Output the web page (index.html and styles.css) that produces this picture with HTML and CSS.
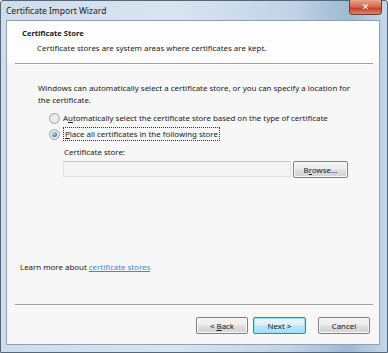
FILE: index.html
```html
<!DOCTYPE html>
<html>
<head>
<meta charset="utf-8">
<link rel="stylesheet" href="styles.css">
</head>
<body>
<div class="window">
  <div class="titlebar">
    <span class="title">Certificate Import Wizard</span>
    <span class="close"><span class="x">✕</span></span>
  </div>
  <div class="client">
    <div class="header">
      <div class="h-title">Certificate Store</div>
      <div class="h-sub">Certificate stores are system areas where certificates are kept.</div>
    </div>
    <div class="sep"></div>
    <div class="body">
      <p class="intro">Windows can automatically select a certificate store, or you can specify a location for the certificate.</p>
      <div class="radio-row">
        <span class="radio"></span>
        <span class="label">A<u>u</u>tomatically select the certificate store based on the type of certificate</span>
      </div>
      <div class="radio-row">
        <span class="radio checked"></span>
        <span class="label focus"><u>P</u>lace all certificates in the following store</span>
      </div>
      <div class="store-label">Certificate store:</div>
      <div class="store-row">
        <div class="field"></div>
        <div class="btn browse">B<u>r</u>owse...</div>
      </div>
      <div class="spacer"></div>
      <div class="learn">Learn more about <a class="link">certificate stores</a></div>
    </div>
    <div class="sep bottom"></div>
    <div class="footer">
      <div class="btn back"><span>&lt; <u>B</u>ack</span></div>
      <div class="btn default"><span>Next &gt;</span></div>
      <div class="btn cancel"><span>Cancel</span></div>
    </div>
  </div>
</div>
</body>
</html>
```
FILE: styles.css
```css
* { box-sizing: border-box; }
html, body { margin: 0; padding: 0; background: #ffffff; }
body {
  font-family: "Noto Sans", "Open Sans", sans-serif;
  font-size: 7.9px;
  color: #1a1a1a;
}
.window {
  width: 388px;
  height: 353px;
  border: 1px solid #55677a;
  border-radius: 3px 3px 0 0;
  background: linear-gradient(90deg, #cfdcea 0%, #d9e4f0 45%, #c2d3e6 75%, #9fbad3 90%, #c6d7ea 100%);
  padding: 0 7px 7px 5px;
  display: flex;
  flex-direction: column;
}
.titlebar {
  height: 19px;
  display: flex;
  align-items: flex-start;
  justify-content: space-between;
  flex-shrink: 0;
}
.title {
  font-size: 8.5px;
  color: #1a1a1a;
  padding: 4px 0 0 0;
}
.close {
  width: 33px;
  height: 15px;
  margin-right: -2px;
  margin-top: -1px;
  border: 1px solid #7a3a2e;
  border-top: none;
  border-radius: 0 0 4px 4px;
  background: linear-gradient(180deg, #e9a590 0%, #d5644a 50%, #c1432a 60%, #d98a70 100%);
  display: flex;
  align-items: center;
  justify-content: center;
}
.x { color: #fff; font-size: 9px; font-weight: bold; font-family: "DejaVu Sans", sans-serif; }
.client {
  flex: 1;
  border: 1px solid #8fa1b6;
  background: #f7f7f7;
  display: flex;
  flex-direction: column;
}
.header {
  background: #fdfdfd;
  height: 42px;
  padding: 5px 0 0 15px;
  flex-shrink: 0;
}
.h-title { font-weight: bold; line-height: 15px; font-size: 7.6px; }
.h-sub { line-height: 15px; padding-left: 15px; }
.sep {
  height: 2px;
  margin: 0 6px 0 8px;
  border-top: 1px solid #a0a0a0;
  border-bottom: 1px solid #ffffff;
  flex-shrink: 0;
}
.body {
  flex: 1;
  display: flex;
  flex-direction: column;
  padding: 17px 0 0 31px;
}
.intro { margin: 0 0 4px 0; line-height: 12px; width: 320px; }
.radio-row {
  display: flex;
  align-items: center;
  height: 16px;
  padding-left: 11px;
}
.radio {
  width: 11px;
  height: 11px;
  border-radius: 50%;
  border: 1px solid #a3a3a3;
  background: radial-gradient(circle, #f0f0f0 0%, #e2e2e2 100%);
  margin-right: 3px;
  display: flex;
  align-items: center;
  justify-content: center;
  flex-shrink: 0;
}
.radio.checked::after {
  content: "";
  width: 5px;
  height: 5px;
  border-radius: 50%;
  background: radial-gradient(circle at 40% 35%, #bfe6ff 0%, #2a8fd8 60%, #1f5f9e 100%);
}
.label { line-height: 12px; white-space: nowrap; }
.label.focus { border: 1px dotted #333; padding: 0 1px; }
.store-label { margin: 4px 0 0 26px; line-height: 13px; }
.store-row {
  display: flex;
  align-items: flex-start;
  margin: 2px 0 0 25px;
}
.field {
  width: 228px;
  height: 16px;
  border: 1px solid #e2e2e2;
  border-top-color: #c8c8c8;
  background: #f4f4f4;
}
.btn {
  height: 17px;
  border: 1px solid #7f7f7f;
  border-radius: 2px;
  background: linear-gradient(180deg, #f4f4f4 0%, #ececec 48%, #dedede 52%, #d3d3d3 100%);
  display: flex;
  align-items: center;
  justify-content: center;
  line-height: 12px;
  box-shadow: inset 0 0 0 1px #fbfbfb;
}
.browse { width: 55px; margin-left: 2px; }
.spacer { flex: 1; }
.learn { margin: 0 0 31px -18px; line-height: 12px; }
.link { color: #3a8ad6; text-decoration: underline; }
.footer {
  height: 38px;
  display: flex;
  padding: 11px 0 0 189px;
  flex-shrink: 0;
}
.footer .btn { width: 52px; flex-shrink: 0; }
.footer .btn.default {
  width: 53px;
  margin-left: 5px;
  border-color: #3c7fb1;
  box-shadow: inset 0 0 0 1px #9fe0f8;
  background: linear-gradient(180deg, #eaf6fd 0%, #d9f0fc 48%, #bee6fd 52%, #a7d9f5 100%);
}
.footer .btn.cancel { margin-left: 12px; }
```
